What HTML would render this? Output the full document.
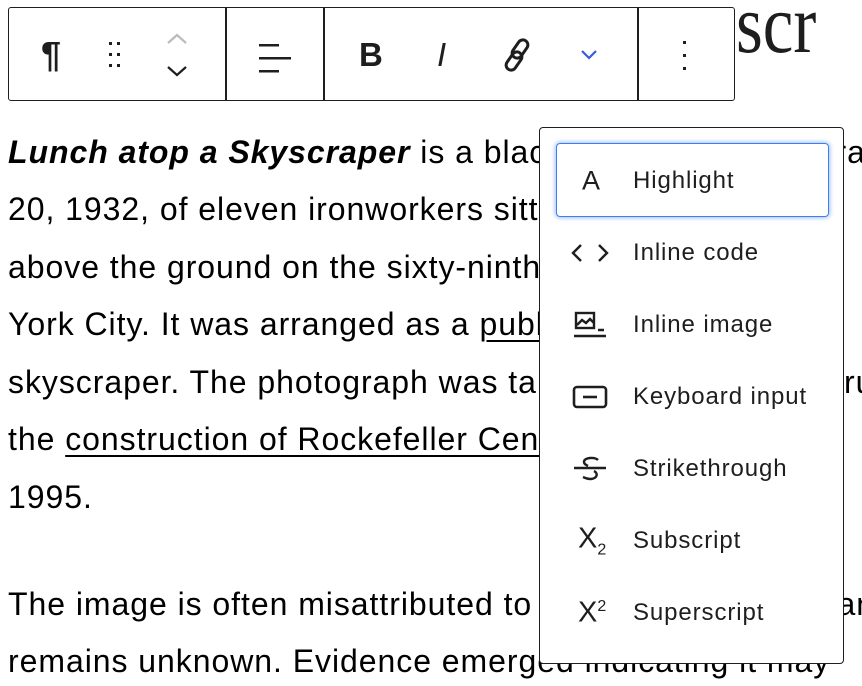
<!DOCTYPE html>
<html><head><meta charset="utf-8"><style>
html,body{margin:0;padding:0;background:#fff;}
body{width:862px;height:686px;overflow:hidden;position:relative;font-family:"Liberation Sans",sans-serif;color:#1e1e1e;}
.clip{position:absolute;left:0;top:0;width:862px;height:686px;overflow:hidden;}
.p{position:absolute;left:8px;white-space:nowrap;font-size:32px;letter-spacing:0.95px;color:#000;}
.u{text-decoration:underline;text-decoration-thickness:1.5px;text-underline-offset:5px;}
.tb{position:absolute;left:8px;top:7px;width:727px;height:94px;border:1.5px solid #1e1e1e;border-radius:3px;box-sizing:border-box;background:#fff;}
.sep{position:absolute;top:0;bottom:0;width:1.5px;background:#1e1e1e;}
.ic{position:absolute;}
.pop{position:absolute;left:539px;top:127px;width:305px;height:537px;border:1.5px solid #1e1e1e;border-radius:4px;box-sizing:border-box;background:#fff;}
.it{position:absolute;left:0;width:100%;height:72px;}
.it .lb{position:absolute;left:93px;top:50%;transform:translateY(-50%);font-size:24px;letter-spacing:0.9px;color:#1e1e1e;white-space:nowrap;}
.it svg{position:absolute;left:30px;top:50%;transform:translateY(-50%);}
.focus{position:absolute;left:16px;top:15px;width:273px;height:74px;border:1.5px solid #3c7ff0;border-radius:4px;box-shadow:0 0 4px 1px rgba(60,127,240,.5);box-sizing:border-box;}
</style></head><body>
<div class="clip">
<div style="position:absolute;left:736px;top:-24px;font-family:'Liberation Serif',serif;font-size:84px;color:#1e1e1e;transform:scaleX(.82);transform-origin:left top;">scr</div>
<div class="p" style="top:134px"><b><i>Lunch atop a Skyscraper</i></b> is a black-and-white photograph taken September</div>
<div class="p" style="top:191px">20, 1932, of eleven ironworkers sitting on a steel beam</div>
<div class="p" style="top:249px">above the ground on the sixty-ninth floor of the <span class="u">RCA B</span></div>
<div class="p" style="top:306px">York City. It was arranged as a <span class="u">publicity stunt</span>, part of a</div>
<div class="p" style="top:364px">skyscraper. The photograph was taken during the construc</div>
<div class="p" style="top:421px">the <span class="u">construction of Rockefeller Center</span> and was reco</div>
<div class="p" style="top:479px">1995.</div>
<div class="p" style="top:586px">The image is often misattributed to Charles C. Ebbets, and the</div>
<div class="p" style="top:643px">remains unknown. Evidence emerged indicating it may</div>
</div>

<div class="tb">
 <div class="sep" style="left:216px"></div>
 <div class="sep" style="left:314px"></div>
 <div class="sep" style="left:628px"></div>
 <div class="ic" style="left:32px;top:26px;font-size:36px;font-weight:bold;">¶</div>
 <svg class="ic" style="left:98px;top:32px" width="24" height="30"><g fill="#1e1e1e"><rect x="2" y="2" width="3" height="3"/><rect x="10" y="2" width="3" height="3"/><rect x="2" y="13" width="3" height="3"/><rect x="10" y="13" width="3" height="3"/><rect x="2" y="24" width="3" height="3"/><rect x="10" y="24" width="3" height="3"/></g></svg>
 <svg class="ic" style="left:157px;top:22px" width="24" height="50" fill="none" stroke-width="2.2"><path d="M2 13l9-8 9 8" stroke="#bbb"/><path d="M2 37l9 8 9-8" stroke="#1e1e1e"/></svg>
 <svg class="ic" style="left:248px;top:34px" width="36" height="32" fill="#1e1e1e"><rect x="2" y="2" width="20" height="2.5"/><rect x="2" y="15" width="32" height="2.5"/><rect x="2" y="28" width="20" height="2.5"/></svg>
 <div class="ic" style="left:350px;top:28px;font-size:33px;font-weight:bold;">B</div>
 <div class="ic" style="left:428px;top:28px;font-size:33px;font-style:italic;">I</div>
 <svg class="ic" style="left:490px;top:28px" width="40" height="40" fill="none" stroke="#1e1e1e" stroke-width="3"><rect x="16" y="3" width="10" height="20" rx="5" transform="rotate(35 21 13)"/><rect x="10" y="15" width="10" height="20" rx="5" transform="rotate(35 15 25)"/></svg>
 <svg class="ic" style="left:570px;top:40px" width="20" height="14" fill="none" stroke="#3858e9" stroke-width="2.2"><path d="M3 3l7 7 7-7"/></svg>
 <svg class="ic" style="left:672px;top:30px" width="8" height="36" fill="#1e1e1e"><rect x="2" y="3" width="3" height="3"/><rect x="2" y="16" width="3" height="3"/><rect x="2" y="29" width="3" height="3"/></svg>
</div>

<div class="pop">
 <div class="focus"></div>
 <div class="it" style="top:17px"><div class="ic" style="left:42px;top:50%;transform:translateY(-50%);font-size:27px;">A</div><div class="lb">Highlight</div></div>
 <div class="it" style="top:89px"><svg width="40" height="24" fill="none" stroke="#1e1e1e" stroke-width="2.4"><path d="M11 4l-8 8 8 8M29 4l8 8-8 8"/></svg><div class="lb">Inline code</div></div>
 <div class="it" style="top:161px"><svg width="40" height="30" fill="none" stroke="#1e1e1e" stroke-width="2.4"><rect x="6" y="3" width="18" height="15"/><path d="M7 15l5-5 4 3 4-4 4 4"/><path d="M4 26h32M28 20h6"/></svg><div class="lb">Inline image</div></div>
 <div class="it" style="top:233px"><svg width="40" height="26" fill="none" stroke="#1e1e1e" stroke-width="2.6"><rect x="4" y="3" width="32" height="20" rx="3"/><path d="M13 13h14"/></svg><div class="lb">Keyboard input</div></div>
 <div class="it" style="top:305px"><svg width="40" height="30" fill="none" stroke="#1e1e1e" stroke-width="2.4"><path d="M28 6c-3-3-14-3-14 2 0 2 2 3 4 4M4 14h32M24 17c4 2 4 7-3 8-3 0-6-1-8-2"/></svg><div class="lb">Strikethrough</div></div>
 <div class="it" style="top:377px"><div class="ic" style="left:38px;top:50%;transform:translateY(-50%);font-size:29px;">X<sub style="font-size:16px">2</sub></div><div class="lb">Subscript</div></div>
 <div class="it" style="top:449px"><div class="ic" style="left:38px;top:50%;transform:translateY(-50%);font-size:29px;">X<sup style="font-size:16px">2</sup></div><div class="lb">Superscript</div></div>
</div>
</body></html>
